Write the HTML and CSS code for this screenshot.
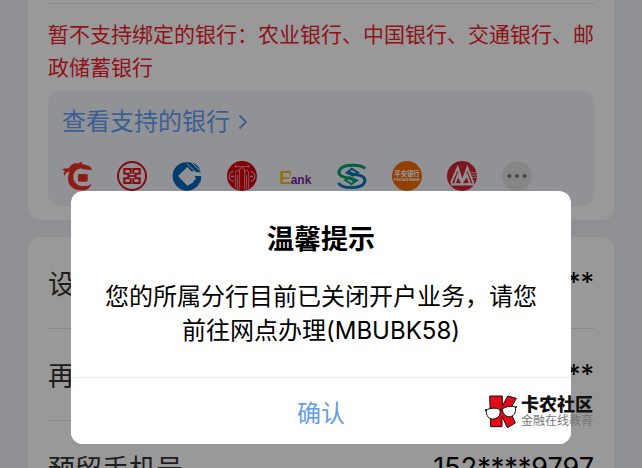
FILE: index.html
```html
<!DOCTYPE html>
<html lang="zh-CN">
<head>
    <meta charset="UTF-8">
    <meta name="viewport" content="width=device-width, initial-scale=1.0">
    <title>温馨提示</title>
    <link rel="stylesheet" href="styles.css">
</head>
<body>
    <main>
        <section class="card bank-card">
            <p class="notice">暂不支持绑定的银行：农业银行、中国银行、交通银行、邮政储蓄银行</p>
            <div class="bank-panel">
                <a href="#" class="bank-link">查看支持的银行
                    <svg class="chevron" viewBox="0 0 10 16"><path d="M1.5 1.5 8 8l-6.500 6.500" fill="none" stroke="currentColor" stroke-width="1.800"/></svg>
                </a>
                <div class="bank-list">
                    <svg viewBox="0 0 90 90">
                        <path d="M0 26C8 21 13 24 20 22 28 10 38 3 49 8 56 0 61 3 60 10 68 9 74 14 80 14 87 17 89 22 90 28 80 23 70 30 57 22 43 25 35 33 34 45 33 63 46 78 67 75 77 75 83 72 89 68 84 84 69 90 53 88 28 85 14 67 19 44 21 37 24 32 20 32 13 34 9 37 8 44 3 40 6 34 9 30Z" fill="#ee3027"/>
                        <rect x="48" y="39" width="29" height="23" rx="4" fill="#ee3027"/>
                    </svg>
                    <svg viewBox="0 0 90 90">
                        <g fill="none" stroke="#d8121c">
                            <circle cx="45" cy="45" r="42" stroke-width="6"/>
                            <path d="M41 38V24H22v14h12v14H22v14h19V52M49 38V24h19v14H56v14h12v14H49V52" stroke-width="6"/>
                            <path d="M34 45h22" stroke-width="5"/>
                        </g>
                    </svg>
                    <svg viewBox="0 0 90 90">
                        <path d="M58 7C32-4 3 14 2 44c0 26 20 45 44 45 18 0 33-11 39-28H70L46 74 18 45l28-27 14 14 13-7Z" fill="#0066b8"/>
                        <path d="M46 24 69 46 46 68 24 46Z" fill="#edf1f5"/>
                        <path d="M48 4c18-1 34 10 38 30H71L44 9Z" fill="#0066b8"/>
                        <path d="M45 8 76 38M58 4l26 25" stroke="#edf1f5" stroke-width="3"/>
                        <path d="M67 45h20c1 7 0 13-2 18H62l10-10Z" fill="#0066b8"/>
                    </svg>
                    <svg viewBox="0 0 90 90">
                        <circle cx="45" cy="45" r="45" fill="#d8000e"/>
                        <g fill="none" stroke="#f4dce2" stroke-width="2">
                            <path d="M22 17h46M26 11v8M64 11v8"/>
                            <path d="M25 82V38c0-14 12-14 12 0v50M31 85V42M53 88V38c0-14 12-14 12 0v44M59 85V42M37 34c0-10 3-14 8-14s8 4 8 14"/>
                            <path d="M19 31C2 34 2 58 19 61M71 31c17 3 17 27 0 30M12 46h9M69 46h9" stroke-width="3"/>
                        </g>
                    </svg>
                    <svg viewBox="0 0 90 90">
                        <text x="-8" y="68" class="ebank-e">E</text>
                        <text x="26" y="68" class="ebank-text">ank</text>
                        <path d="M14 33c8-6 14 0 10 10" fill="none" stroke="#f2b92b" stroke-width="5"/>
                    </svg>
                    <svg viewBox="0 0 90 90">
                        <path d="M84 23C75 11 20 7 8 27c-9 17 13 23 32 25l14 9" fill="none" stroke="#00a06a" stroke-width="9"/>
                        <path d="M4 66c12 18 69 19 78-1 8-19-15-23-34-25L32 31" fill="none" stroke="#0876bf" stroke-width="9"/>
                        <path d="m44 23 19 12-14 9-20-9Z" fill="none" stroke="#0876bf" stroke-width="6"/>
                        <path d="m43 69-18-11 14-9 21 9Z" fill="none" stroke="#00a06a" stroke-width="6"/>
                    </svg>
                    <svg viewBox="0 0 90 90">
                        <circle cx="45" cy="45" r="45" fill="#f36a08"/>
                        <text x="45" y="46" class="pingan-cn">平安银行</text>
                        <text x="45" y="61" class="pingan-en">PINGAN BANK</text>
                    </svg>
                    <svg viewBox="0 0 90 90">
                        <circle cx="45" cy="45" r="45" fill="#d0242f"/>
                        <path d="M12 66 32 20l14 42 15-42 18 46M24 66l9-24 12 24 15-24 8 24" fill="none" stroke="#edf1f5" stroke-width="6"/>
                        <path d="M12 70h70" stroke="#edf1f5" stroke-width="7"/>
                        <path d="M70 35h20M73 42h17M76 49h14" stroke="#edf1f5" stroke-width="2"/>
                    </svg>
                    <svg viewBox="0 0 90 90">
                        <circle cx="45" cy="45" r="45" fill="#dfe0e2"/>
                        <g fill="#74767a"><circle cx="22" cy="45" r="6"/><circle cx="45" cy="45" r="6"/><circle cx="68" cy="45" r="6"/></g>
                    </svg>
                </div>
            </div>
        </section>
        <section class="card form-card">
            <div class="row"><span>设置密码</span><span class="value">******</span></div>
            <div class="row"><span>再次输入</span><span class="value">******</span></div>
            <div class="row"><span>预留手机号</span><span class="value">152****9797</span></div>
        </section>
    </main>

    <div class="overlay">
        <div class="modal" role="dialog" aria-modal="true" aria-labelledby="modalTitle">
            <div class="modal-body">
                <h1 id="modalTitle">温馨提示</h1>
                <p>您的所属分行目前已关闭开户业务，请您前往网点办理(MBUBK58)</p>
            </div>
            <button type="button" class="btn-confirm">确认</button>
        </div>
    </div>

    <div class="watermark">
        <svg viewBox="0 0 96 99">
            <path d="M14 3h38v30L68 3l26 7-20 36 17 38-24 14-16-34v31H17Z" fill="#e50b16" stroke="#111" stroke-width="3"/>
            <path d="M3 46c10-8 31-8 41-3 5 14-3 27-18 29C11 74 4 62 3 46ZM52 42c10-8 29-10 39-6 3 13-2 26-15 29-13 2-23-8-24-23Z" fill="#fff" stroke="#111" stroke-width="3"/>
            <path d="M0 45h6M44 46l9-4M90 38l6-3" stroke="#111" stroke-width="5"/>
        </svg>
        <div>
            <strong>卡农社区</strong>
            <small>金融在线教育</small>
        </div>
    </div>
</body>
</html>
```
FILE: styles.css
```css
* {
    margin: 0;
    padding: 0;
    box-sizing: border-box;
}

body {
    height: 100vh;
    overflow: hidden;
    position: relative;
    background: #eef1f5;
    color: #333;
    font-family: "Inter", "Noto Sans CJK SC", sans-serif;
}

main {
    padding: 0 28px;
    display: flex;
    flex-direction: column;
    gap: 17px;
}

.card {
    background: #fff;
    border-radius: 12px;
    padding: 0 20px;
}

.bank-card {
    border-radius: 0 0 12px 12px;
    padding: 3px 20px 14px;
}

.notice {
    border-top: 1px solid #e4e4e4;
    padding: 14px 0 7px;
    color: #f0202c;
    font-size: 21px;
    line-height: 33px;
}

.bank-panel {
    background: #f1f4f8;
    border-radius: 12px;
    padding: 14px 14px 15px;
}

.bank-link {
    display: flex;
    align-items: center;
    gap: 8px;
    color: #639df5;
    font-size: 24px;
    line-height: 34px;
    text-decoration: none;
}

.chevron {
    width: 10px;
    height: 16px;
}

.bank-list {
    display: flex;
    gap: 25px;
    padding-top: 22px;
}

.bank-list svg {
    width: 30px;
    height: 30px;
    overflow: visible;
}

.ebank-e {
    font: bold 54px "Liberation Sans", sans-serif;
    fill: #f2b92b;
}

.ebank-text {
    font: bold 36px "Liberation Sans", sans-serif;
    fill: #7d1a9b;
}

.pingan-cn {
    font: bold 19px "Noto Sans CJK SC", sans-serif;
    fill: #fff;
    text-anchor: middle;
}

.pingan-en {
    font: bold 11px "Liberation Sans", sans-serif;
    fill: #fff;
    text-anchor: middle;
}

.row {
    display: flex;
    justify-content: space-between;
    align-items: center;
    height: 92px;
    border-bottom: 1px solid #e4e4e4;
    font-size: 27px;
}

.row:last-child {
    border-bottom: none;
}

.value {
    color: #000;
}

.overlay {
    position: absolute;
    inset: 0;
    padding: 191px 71px 0;
    background: rgba(0, 0, 0, 0.4);
}

.modal {
    background: #fff;
    border-radius: 12px;
    overflow: hidden;
    text-align: center;
    color: #000;
}

.modal-body {
    padding: 30px 30px 29px;
}

.modal h1 {
    margin-bottom: 21px;
    font-size: 27px;
    font-weight: 700;
    line-height: 38px;
}

.modal p {
    font-size: 24px;
    line-height: 34px;
}

.btn-confirm {
    width: 100%;
    height: 67px;
    border: none;
    border-top: 1px solid #ececec;
    background: #fff;
    color: #639be4;
    font-family: inherit;
    font-size: 24px;
    cursor: pointer;
}

/* community logo floating over the page */
.watermark {
    position: absolute;
    right: 49px;
    bottom: 40px;
    display: flex;
    align-items: center;
    gap: 4px;
}

.watermark svg {
    width: 32px;
    height: 33px;
}

.watermark strong,
.watermark small {
    display: block;
}

.watermark strong {
    color: #111;
    font-size: 18px;
    font-weight: 900;
    line-height: 19px;
}

.watermark small {
    color: #777;
    font-size: 12px;
    line-height: 14px;
}
```
